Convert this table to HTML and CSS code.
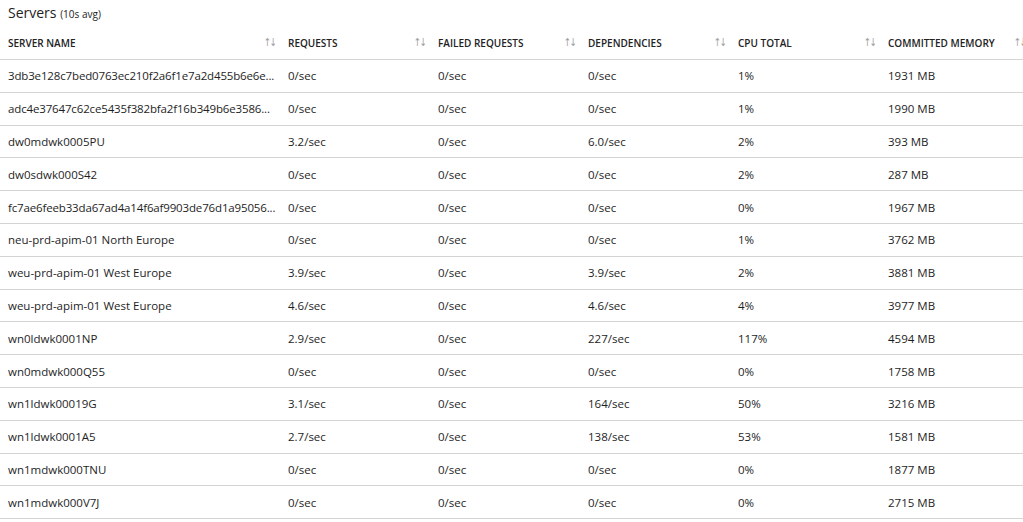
FILE: index.html
```html
<!DOCTYPE html>
<html>
<head>
<meta charset="utf-8">
<link rel="stylesheet" href="styles.css">
</head>
<body>
<div class="panel">
  <div class="title">Servers <span class="sub">(10s avg)</span></div>
  <div class="table">
    <div class="row head">
      <div class="cell c1"><span>SERVER NAME</span><i class="sort">↑↓</i></div>
      <div class="cell"><span>REQUESTS</span><i class="sort">↑↓</i></div>
      <div class="cell"><span>FAILED REQUESTS</span><i class="sort">↑↓</i></div>
      <div class="cell"><span>DEPENDENCIES</span><i class="sort">↑↓</i></div>
      <div class="cell"><span>CPU TOTAL</span><i class="sort">↑↓</i></div>
      <div class="cell"><span>COMMITTED MEMORY</span><i class="sort">↑↓</i></div>
    </div>
    <div class="row"><div class="cell c1"><span class="ell">3db3e128c7bed0763ec210f2a6f1e7a2d455b6e6e...</span></div><div class="cell">0/sec</div><div class="cell">0/sec</div><div class="cell">0/sec</div><div class="cell">1%</div><div class="cell">1931 MB</div></div>
    <div class="row"><div class="cell c1"><span class="ell">adc4e37647c62ce5435f382bfa2f16b349b6e3586...</span></div><div class="cell">0/sec</div><div class="cell">0/sec</div><div class="cell">0/sec</div><div class="cell">1%</div><div class="cell">1990 MB</div></div>
    <div class="row"><div class="cell c1">dw0mdwk0005PU</div><div class="cell">3.2/sec</div><div class="cell">0/sec</div><div class="cell">6.0/sec</div><div class="cell">2%</div><div class="cell">393 MB</div></div>
    <div class="row"><div class="cell c1">dw0sdwk000S42</div><div class="cell">0/sec</div><div class="cell">0/sec</div><div class="cell">0/sec</div><div class="cell">2%</div><div class="cell">287 MB</div></div>
    <div class="row"><div class="cell c1"><span class="ell">fc7ae6feeb33da67ad4a14f6af9903de76d1a95056...</span></div><div class="cell">0/sec</div><div class="cell">0/sec</div><div class="cell">0/sec</div><div class="cell">0%</div><div class="cell">1967 MB</div></div>
    <div class="row"><div class="cell c1">neu-prd-apim-01 North Europe</div><div class="cell">0/sec</div><div class="cell">0/sec</div><div class="cell">0/sec</div><div class="cell">1%</div><div class="cell">3762 MB</div></div>
    <div class="row"><div class="cell c1">weu-prd-apim-01 West Europe</div><div class="cell">3.9/sec</div><div class="cell">0/sec</div><div class="cell">3.9/sec</div><div class="cell">2%</div><div class="cell">3881 MB</div></div>
    <div class="row"><div class="cell c1">weu-prd-apim-01 West Europe</div><div class="cell">4.6/sec</div><div class="cell">0/sec</div><div class="cell">4.6/sec</div><div class="cell">4%</div><div class="cell">3977 MB</div></div>
    <div class="row"><div class="cell c1">wn0ldwk0001NP</div><div class="cell">2.9/sec</div><div class="cell">0/sec</div><div class="cell">227/sec</div><div class="cell">117%</div><div class="cell">4594 MB</div></div>
    <div class="row"><div class="cell c1">wn0mdwk000Q55</div><div class="cell">0/sec</div><div class="cell">0/sec</div><div class="cell">0/sec</div><div class="cell">0%</div><div class="cell">1758 MB</div></div>
    <div class="row"><div class="cell c1">wn1ldwk00019G</div><div class="cell">3.1/sec</div><div class="cell">0/sec</div><div class="cell">164/sec</div><div class="cell">50%</div><div class="cell">3216 MB</div></div>
    <div class="row"><div class="cell c1">wn1ldwk0001A5</div><div class="cell">2.7/sec</div><div class="cell">0/sec</div><div class="cell">138/sec</div><div class="cell">53%</div><div class="cell">1581 MB</div></div>
    <div class="row"><div class="cell c1">wn1mdwk000TNU</div><div class="cell">0/sec</div><div class="cell">0/sec</div><div class="cell">0/sec</div><div class="cell">0%</div><div class="cell">1877 MB</div></div>
    <div class="row"><div class="cell c1">wn1mdwk000V7J</div><div class="cell">0/sec</div><div class="cell">0/sec</div><div class="cell">0/sec</div><div class="cell">0%</div><div class="cell">2715 MB</div></div>
  </div>
</div>
</body>
</html>
```

FILE: styles.css
```css
html, body {
  margin: 0;
  padding: 0;
  background: #fff;
  overflow: hidden;
}
body {
  font-family: "Open Sans", "Noto Sans", sans-serif;
  color: #1e1e1e;
  width: 1023px;
  height: 522px;
}
.panel {
  width: 1040px;
}
.title {
  padding: 4px 0 0 8px;
  height: 26px;
  font-size: 14px;
  line-height: 18px;
  color: #222;
}
.title .sub {
  font-size: 10px;
}
.table {
  display: flex;
  flex-direction: column;
}
.row {
  display: flex;
  height: 31.8px;
  box-sizing: content-box;
  border-bottom: 1px solid #d4d4d4;
  align-items: center;
  font-size: 11.5px;
  padding-top: 1px;
  margin-top: -1px;
}
.row.head {
  height: 25px;
  padding-top: 0;
  padding-bottom: 4px;
  margin-top: 0;
  font-size: 10px;
  font-weight: 600;
  color: #222;
}
.cell {
  width: 150px;
  padding-left: 8px;
  box-sizing: border-box;
  display: flex;
  align-items: center;
  white-space: nowrap;
}
.cell.c1 {
  width: 280px;
}
.cell span {
  flex: 1;
}
.ell {
  letter-spacing: -0.15px;
}
.sort {
  font-style: normal;
  font-weight: 400;
  color: #a0a0a0;
  font-size: 11px;
  letter-spacing: -2px;
  padding-right: 4px;
  font-family: "DejaVu Sans", sans-serif;
  transform: scaleX(0.8);
}
```
